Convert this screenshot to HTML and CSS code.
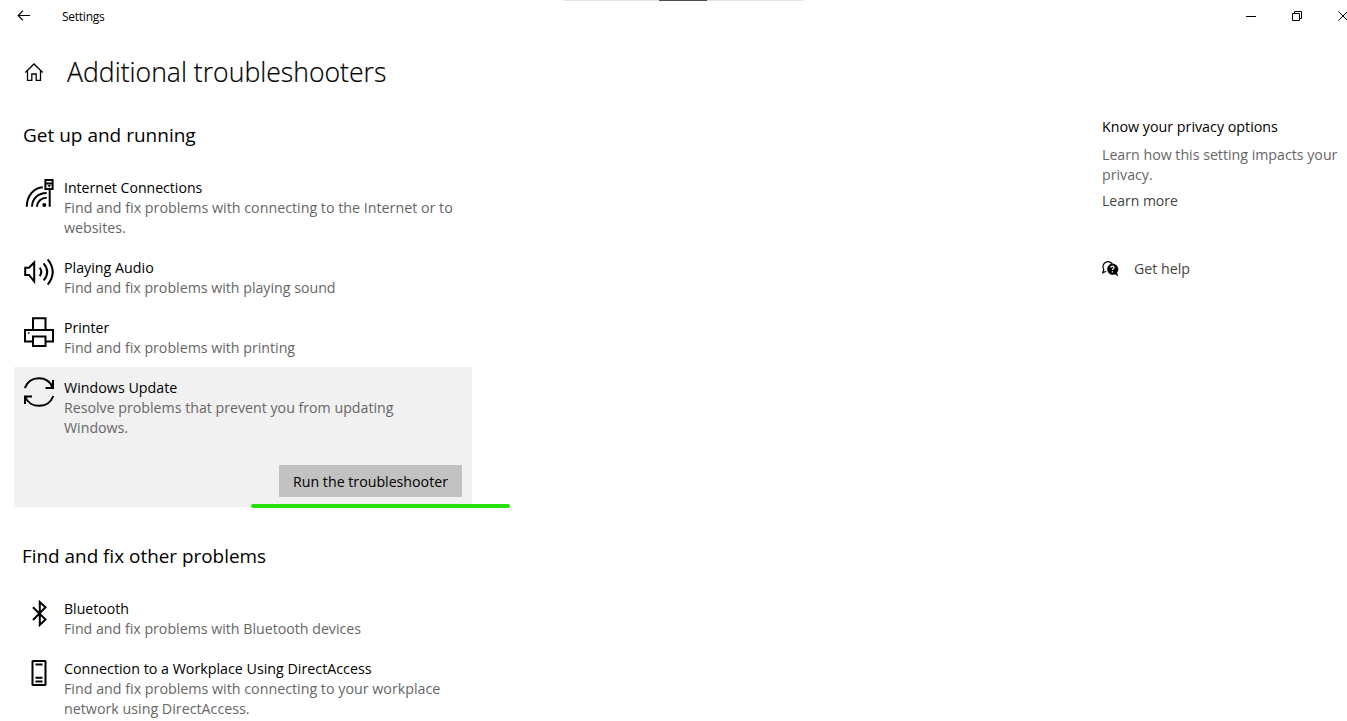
FILE: index.html
```html
<!DOCTYPE html>
<html lang="en">
<head>
<meta charset="utf-8">
<title>Settings</title>
<link rel="stylesheet" href="styles.css">
</head>
<body>
<div class="window">
  <div class="drag-handle"><span class="drag-grip"></span></div>
  <header class="titlebar">
    <svg class="back" width="14" height="12" viewBox="0 0 14 12"><path d="M13 5.500H1.200M6 .7 1.200 5.500 6 10.300"/></svg>
    <span class="app-name">Settings</span>
    <div class="controls">
      <svg width="12" height="12" viewBox="0 0 12 12"><path d="M1 6.500h10"/></svg>
      <svg width="12" height="12" viewBox="0 0 12 12"><path d="M1.500 3.500h7v7h-7zM3.500 3.500v-2h7v7h-2"/></svg>
      <svg width="12" height="12" viewBox="0 0 12 12"><path d="m1.500 1.500 9 9M10.500 1.500l-9 9"/></svg>
    </div>
  </header>
  <div class="page-head">
    <svg class="home" width="20" height="20" viewBox="0 0 20 20"><path d="M1.300 10.500 10 2l8.700 8.500M3.500 9v9.300h4.300v-6.300h4.400v6.300h4.300V9"/></svg>
    <h1>Additional troubleshooters</h1>
  </div>
  <div class="columns">
    <main>
      <h2 class="h-run">Get up and running</h2>
      <section class="list">
        <article class="item">
          <svg class="icon" viewBox="0 0 32 32"><path d="M22.400 3h7.200v9h-7.200zM22.500 6.500h7M26.700 12v17.700M3.700 29.700C4 19 10.500 10.800 19.800 10.300M9 29.700C9.300 21.500 15 16 23.700 16M14 29.700c.3-5.300 4.200-9 9.700-9"/><path class="solid" d="M24.500 8h3.500l-1.700 2.500z"/><circle class="solid" cx="21.300" cy="28" r="2"/></svg>
          <div class="text"><h3>Internet Connections</h3><p class="wide">Find and fix problems with connecting to the Internet or to<br>websites.</p></div>
        </article>
        <article class="item">
          <svg class="icon" viewBox="0 0 32 32"><path d="M2.200 10.800H6l5.200-5.300v19L6 18H2.200zM16.700 10.600q3.200 4.200 0 8.500M20.600 6.400q7.200 8.500 0 17M24.700 2.400q10 12.600 0 25.200"/></svg>
          <div class="text"><h3 class="wide">Playing Audio</h3><p>Find and fix problems with playing sound</p></div>
        </article>
        <article class="item">
          <svg class="icon" viewBox="0 0 32 32"><path d="M10 12.500V1.200h12.500v11.300M10 24.500H2v-11.500h28v11.500h-7.500M10 19.500h12.500v9.500H10z"/><path class="solid" d="M5 15.200h1.500v1.500H5z"/></svg>
          <div class="text"><h3>Printer</h3><p>Find and fix problems with printing</p></div>
        </article>
        <article class="item selected">
          <svg class="icon" viewBox="0 0 32 32"><path d="M1.800 11C7-1.800 24.500-1.800 29.600 10.500M30 3v8h-7.500M30.300 19C25.500 32 7 32 2.200 19.800M2 27v-7.500h7"/></svg>
          <div class="text"><h3 class="wide">Windows Update</h3><p>Resolve problems that prevent you from updating<br>Windows.</p><button>Run the troubleshooter</button></div>
          <span class="marker"></span>
        </article>
      </section>
      <h2 class="h-other">Find and fix other problems</h2>
      <section class="list">
        <article class="item">
          <svg class="icon" viewBox="0 0 32 32"><path d="m10 9.300 12.500 12.200-5.700 5.500V4l5.700 5.300L10 22"/></svg>
          <div class="text"><h3>Bluetooth</h3><p>Find and fix problems with Bluetooth devices</p></div>
        </article>
        <article class="item">
          <svg class="icon" viewBox="0 0 32 32"><rect x="9.500" y="3" width="13" height="24" rx=".5"/><path d="M12.500 6.500h7M12.500 19.800h7M12.500 23.500h7"/></svg>
          <div class="text"><h3 class="wide">Connection to a Workplace Using DirectAccess</h3><p class="wide">Find and fix problems with connecting to your workplace<br>network using DirectAccess.</p></div>
        </article>
      </section>
    </main>
    <aside>
      <h3 class="wide">Know your privacy options</h3>
      <p class="privacy">Learn how this setting impacts your<br>privacy.</p>
      <a class="more">Learn more</a>
      <div class="help">
        <svg width="17" height="17" viewBox="0 0 17 17"><path class="bubble" d="M4.200 10.200 .8 11.700l1-3.200A5 5 0 1 1 10.300 3"/><path class="solid" d="M15 11.800A5.600 5.600 0 1 0 13 13.300L16.300 15.500z"/><path class="question" d="M8.800 6.800c0-2.200 3.300-2 3.200-.2-.1 1.200-1.600 1.200-1.600 2.500M10.400 10.200v1.300"/></svg>
        <span>Get help</span>
      </div>
    </aside>
  </div>
</div>
</body>
</html>
```

FILE: styles.css
```css
* { box-sizing: border-box; }
body { margin: 0; background: #fff; color: #000; font-family: "Open Sans", "Noto Sans", sans-serif; font-size: 14.2px; line-height: 20px; }
h1, h2, h3, p { margin: 0; font-weight: 400; white-space: nowrap; }
h3 { font-size: 14.1px; line-height: 20px; }
p { color: #666; }
.wide { font-size: 14.28px; }
svg { display: block; flex: none; fill: none; stroke: #000; }
.window { position: relative; width: 1347px; height: 721px; overflow: hidden; }
.drag-handle { position: absolute; top: 0; left: 563px; width: 241px; height: 1px; background: #e5e5e5; }
.drag-grip { display: block; width: 48px; height: 1px; margin-left: 96px; background: #4c4c4c; }
.titlebar { display: flex; align-items: center; height: 32px; padding-left: 17px; }
.back { stroke-width: 1.2; }
.app-name { margin-left: 31px; font-size: 12px; letter-spacing: -.25px; padding-top: 2px; }
.controls { display: flex; gap: 34px; margin-left: auto; margin-right: -2px; }
.page-head { display: flex; align-items: center; height: 80px; padding-left: 24px; }
.home { stroke-width: 1.3; }
h1 { margin-left: 23px; font-size: 26.6px; line-height: 36px; font-weight: 300; -webkit-text-stroke: .2px #000; }
.columns { display: flex; justify-content: space-between; }
main { width: 458px; margin-left: 14px; }
h2 { padding-left: 9px; font-size: 19px; line-height: 28px; }
.h-run { margin-top: 9px; margin-bottom: 18px; }
.h-other { margin-top: 35px; margin-bottom: 18px; padding-left: 8px; font-size: 18.9px; }
.item { position: relative; display: flex; gap: 9px; padding: 11px 10px 9px 9px; }
.icon { width: 32px; height: 32px; margin-top: -1px; stroke-width: 2; }
.solid { fill: #000; stroke: none; }
.text { flex: 1; min-width: 0; display: flex; flex-direction: column; }
.selected { height: 140px; background: #f1f1f1; }
button { align-self: flex-end; width: 183px; height: 32px; margin-top: 27px; padding: 1px 0 0; flex: none; border: 0; background: #c2c2c2; color: #000; font: 14.2px/31px "Open Sans", "Noto Sans", sans-serif; }
.marker { position: absolute; left: 237px; top: 137px; width: 259px; height: 4px; border-radius: 2px; background: #28e00b; }
aside { width: 245px; padding-top: 5px; }
.privacy { margin-top: 8px; }
.more { display: block; margin-top: 6px; color: #444; font-size: 14px; }
.help { display: flex; align-items: center; gap: 15px; margin-top: 48px; color: #444; }
.bubble { stroke-width: 1.2; }
.question { stroke: #fff; stroke-width: 1.2; }
```
